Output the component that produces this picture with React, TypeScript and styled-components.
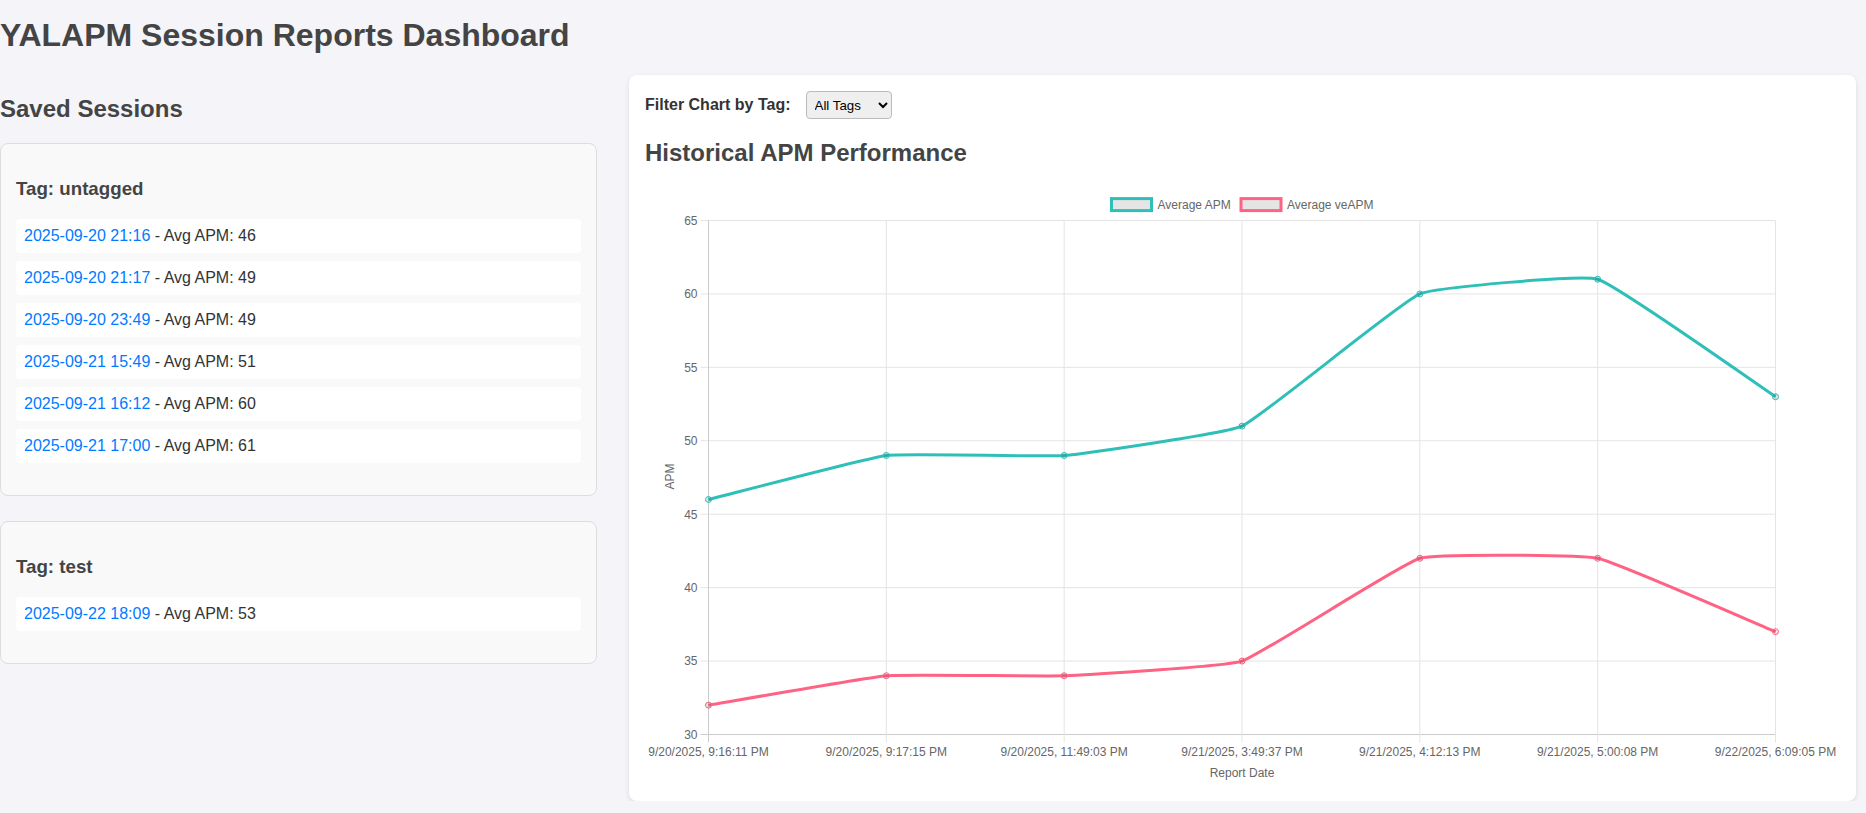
import React from 'react'
import styled, { createGlobalStyle } from 'styled-components'

const GlobalStyle = createGlobalStyle`
  body {
    margin: 0;
    background: #f4f4f9;
    font-family: 'Liberation Sans', Arial, sans-serif;
    color: #333;
  }
`

const Page = styled.div`
  padding-right: 10px;
`

const Title = styled.h1`
  margin: 16.7px 0 21.4px;
  font-size: 32px;
  color: #444;
`

const Layout = styled.div`
  display: grid;
  grid-template-columns: 597px 1fr;
  column-gap: 32px;
  align-items: start;
`

const SideColumn = styled.div`
  display: flex;
  flex-direction: column;
`

const SectionTitle = styled.h2`
  margin: 19.9px 0;
  font-size: 24px;
  color: #444;
`

const TagCard = styled.div`
  background: #f9f9f9;
  border: 1px solid #ddd;
  border-radius: 8px;
  padding: 15px;
  margin-bottom: 25px;
`

const TagTitle = styled.h3`
  margin: 19px 0;
  font-size: 18.72px;
  color: #444;
`

const SessionList = styled.ul`
  list-style: none;
  margin: 0 0 17px;
  padding: 0;
  display: flex;
  flex-direction: column;
  gap: 8px;
`

const SessionItem = styled.li`
  background: #fff;
  border-radius: 4px;
  padding: 8px;
  font-size: 16px;
  line-height: 18px;
  color: #333;
`

const SessionLink = styled.a`
  color: #007bff;
  text-decoration: none;
`

const ChartPanel = styled.div`
  background: #fff;
  border-radius: 8px;
  box-shadow: 0 2px 5px rgba(0, 0, 0, 0.1);
  padding: 16px;
`

const FilterRow = styled.div`
  display: flex;
  align-items: center;
  gap: 15px;
`

const FilterLabel = styled.label`
  font-size: 16px;
  font-weight: bold;
  color: #333;
`

const TagSelect = styled.select`
  font-family: 'Liberation Sans', Arial, sans-serif;
  font-size: 13.33px;
  height: 28px;
  padding: 0 4px;
  background-color: #efefef;
  border: 1px solid #bbb;
  border-radius: 4px;
  color: #000;
`

const ChartBox = styled.div`
  height: 598px;
`

type Session = { date: string; apm: number }

const groups: { tag: string; sessions: Session[] }[] = [
  {
    tag: 'untagged',
    sessions: [
      { date: '2025-09-20 21:16', apm: 46 },
      { date: '2025-09-20 21:17', apm: 49 },
      { date: '2025-09-20 23:49', apm: 49 },
      { date: '2025-09-21 15:49', apm: 51 },
      { date: '2025-09-21 16:12', apm: 60 },
      { date: '2025-09-21 17:00', apm: 61 },
    ],
  },
  {
    tag: 'test',
    sessions: [{ date: '2025-09-22 18:09', apm: 53 }],
  },
]

const labels = [
  '9/20/2025, 9:16:11 PM',
  '9/20/2025, 9:17:15 PM',
  '9/20/2025, 11:49:03 PM',
  '9/21/2025, 3:49:37 PM',
  '9/21/2025, 4:12:13 PM',
  '9/21/2025, 5:00:08 PM',
  '9/22/2025, 6:09:05 PM',
]
const apm = [46, 49, 49, 51, 60, 61, 53]
const veApm = [32, 34, 34, 35, 42, 42, 37]

const TEAL = 'rgb(46, 191, 184)'
const PINK = 'rgb(255, 99, 132)'
const TEXT = '#666'
const FONT = "'Liberation Sans', Arial, sans-serif"

// plot area inside the chart box
const L = 63.5
const R = 1130.5
const T = 33.5
const B = 547.5
const xAt = (i: number) => L + (i * (R - L)) / (labels.length - 1)
const yAt = (v: number) => T + ((65 - v) * (B - T)) / 35

type Pt = { x: number; y: number }

// same spline as chart.js, light tension
const curve = (pts: Pt[], t = 0.1) => {
  const ctrl = pts.map((p, i) => {
    const prev = pts[i - 1] ?? p
    const next = pts[i + 1] ?? p
    const d01 = Math.hypot(p.x - prev.x, p.y - prev.y)
    const d12 = Math.hypot(next.x - p.x, next.y - p.y)
    const sum = d01 + d12
    const fa = t * (sum ? d01 / sum : 0)
    const fb = t * (sum ? d12 / sum : 0)
    return {
      before: { x: p.x - fa * (next.x - prev.x), y: p.y - fa * (next.y - prev.y) },
      after: { x: p.x + fb * (next.x - prev.x), y: p.y + fb * (next.y - prev.y) },
    }
  })
  let d = `M${pts[0].x},${pts[0].y}`
  for (let i = 1; i < pts.length; i++) {
    const a = ctrl[i - 1].after
    const b = ctrl[i].before
    d += ` C${a.x},${a.y} ${b.x},${b.y} ${pts[i].x},${pts[i].y}`
  }
  return d
}

const Series: React.FC<{ values: number[]; color: string }> = ({ values, color }) => {
  const pts = values.map((v, i) => ({ x: xAt(i), y: yAt(v) }))
  return (
    <g>
      <path d={curve(pts)} fill="none" stroke={color} strokeWidth={3} />
      {pts.map((p, i) => (
        <circle key={i} cx={p.x} cy={p.y} r={3} fill="rgba(0,0,0,0.1)" stroke={color} strokeWidth={1} />
      ))}
    </g>
  )
}

const ApmChart: React.FC = () => {
  const ticks = [30, 35, 40, 45, 50, 55, 60, 65]
  return (
    <svg width={1195} height={598} fontFamily={FONT} fontSize={12}>
      {/* legend */}
      <rect x={466.5} y={11.6} width={40} height={12} fill="rgba(0,0,0,0.1)" stroke={TEAL} strokeWidth={3} />
      <text x={512.5} y={21.9} fill={TEXT}>Average APM</text>
      <rect x={596} y={11.6} width={40} height={12} fill="rgba(0,0,0,0.1)" stroke={PINK} strokeWidth={3} />
      <text x={642} y={21.9} fill={TEXT}>Average veAPM</text>

      {/* grid */}
      {ticks.map((v) => (
        <g key={v}>
          <line x1={L - 8} x2={R} y1={yAt(v)} y2={yAt(v)} stroke={v === 30 ? '#ccc' : '#e4e4e4'} strokeWidth={1} />
          <text x={L - 11} y={yAt(v) + 4.3} textAnchor="end" fill={TEXT}>{v}</text>
        </g>
      ))}
      {labels.map((lab, i) => (
        <g key={lab}>
          <line x1={xAt(i)} x2={xAt(i)} y1={T} y2={B + 8} stroke={i === 0 ? '#ccc' : '#e4e4e4'} strokeWidth={1} />
          <text x={xAt(i)} y={569.4} textAnchor="middle" fill={TEXT}>{lab}</text>
        </g>
      ))}

      {/* axis titles */}
      <text x={(L + R) / 2} y={589.5} textAnchor="middle" fill={TEXT}>Report Date</text>
      <text transform="translate(28.5 289.5) rotate(-90)" textAnchor="middle" fill={TEXT}>APM</text>

      <Series values={apm} color={TEAL} />
      <Series values={veApm} color={PINK} />
    </svg>
  )
}

const App: React.FC = () => {
  return (
    <Page>
      <GlobalStyle />
      <Title>YALAPM Session Reports Dashboard</Title>
      <Layout>
        <SideColumn>
          <SectionTitle>Saved Sessions</SectionTitle>
          {groups.map((g) => (
            <TagCard key={g.tag}>
              <TagTitle>Tag: {g.tag}</TagTitle>
              <SessionList>
                {g.sessions.map((s) => (
                  <SessionItem key={s.date}>
                    <SessionLink href="#">{s.date}</SessionLink> - Avg APM: {s.apm}
                  </SessionItem>
                ))}
              </SessionList>
            </TagCard>
          ))}
        </SideColumn>
        <ChartPanel>
          <FilterRow>
            <FilterLabel htmlFor="tag-filter">Filter Chart by Tag:</FilterLabel>
            <TagSelect id="tag-filter" defaultValue="all">
              <option value="all">All Tags</option>
              <option value="untagged">untagged</option>
              <option value="test">test</option>
            </TagSelect>
          </FilterRow>
          <SectionTitle>Historical APM Performance</SectionTitle>
          <ChartBox>
            <ApmChart />
          </ChartBox>
        </ChartPanel>
      </Layout>
    </Page>
  )
}

export default App
